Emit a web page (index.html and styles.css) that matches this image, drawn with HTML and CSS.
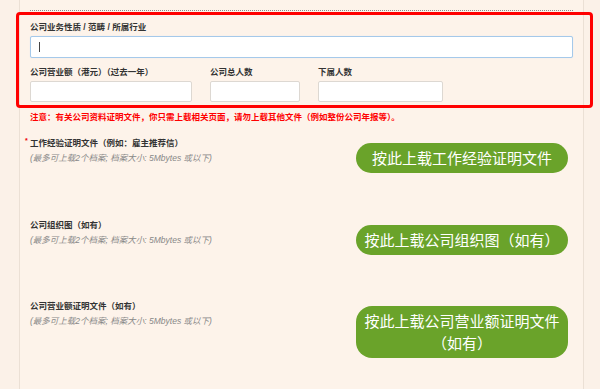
FILE: index.html
```html
<!DOCTYPE html>
<html lang="zh">
<head>
<meta charset="utf-8">
<link rel="stylesheet" href="styles.css">
</head>
<body>
<div class="page">
  <div class="panel">
    <div class="dotted"></div>
    <div class="fields">
      <div class="highlight"></div>
      <div class="field">
        <div class="label">公司业务性质 / 范畴 / 所属行业</div>
        <div class="input focus"><span class="caret"></span></div>
      </div>
      <div class="row">
        <div class="field col-a">
          <div class="label">公司营业额（港元）（过去一年）</div>
          <div class="input"></div>
        </div>
        <div class="field col-b">
          <div class="label">公司总人数</div>
          <div class="input"></div>
        </div>
        <div class="field col-c">
          <div class="label">下属人数</div>
          <div class="input"></div>
        </div>
      </div>
    </div>
    <div class="note">注意：有关公司资料证明文件，你只需上载相关页面，请勿上载其他文件（例如整份公司年报等）。</div>

    <div class="section">
      <div class="info">
        <div class="title"><span class="req">*</span>工作经验证明文件（例如：雇主推荐信）</div>
        <div class="hint">(最多可上载2个档案; 档案大小: 5Mbytes 或以下)</div>
      </div>
      <div class="btn">按此上载工作经验证明文件</div>
    </div>

    <div class="section">
      <div class="info">
        <div class="title">公司组织图（如有）</div>
        <div class="hint">(最多可上载2个档案; 档案大小: 5Mbytes 或以下)</div>
      </div>
      <div class="btn">按此上载公司组织图（如有）</div>
    </div>

    <div class="section">
      <div class="info">
        <div class="title">公司营业额证明文件（如有）</div>
        <div class="hint">(最多可上载2个档案; 档案大小: 5Mbytes 或以下)</div>
      </div>
      <div class="btn">按此上载公司营业额证明文件（如有）</div>
    </div>
  </div>
</div>
</body>
</html>
```

FILE: styles.css
```css
html, body {
  margin: 0;
  padding: 0;
  height: 100%;
}
body {
  background: #fbf1e8;
  font-family: "Liberation Sans", "Noto Sans CJK SC", sans-serif;
  color: #333;
  overflow: hidden;
}
.page {
  height: 389px;
  padding-left: 19px;
}
.panel {
  width: 543px;
  height: 389px;
  box-sizing: content-box;
  padding: 10px 10px 0 10px;
  border-left: 1px solid #ebe0d5;
  border-right: 1px solid #ebe0d5;
  background: #fdf3ea;
}
.dotted {
  border-top: 1px dotted #8a8a8a;
  height: 0;
}
.fields {
  position: relative;
  margin-top: 10px;
}
.highlight {
  position: absolute;
  top: -9px;
  left: -14px;
  right: -20px;
  bottom: -6px;
  border: 3px solid #ff0000;
  border-radius: 4px;
  pointer-events: none;
}
.label {
  font-size: 8.5px;
  line-height: 12px;
  font-weight: bold;
  color: #333;
  margin-bottom: 3px;
}
.input {
  height: 19px;
  background: #fff;
  border: 1px solid #ddd8d2;
  border-radius: 2px;
  position: relative;
}
.input.focus {
  height: 20px;
  border-color: #a5c9ea;
  box-shadow: 0 0 1px #cfe2f3;
}
.caret {
  position: absolute;
  left: 8px;
  top: 5px;
  width: 1px;
  height: 10px;
  background: #444;
}
.row {
  display: flex;
  gap: 18px;
  margin-top: 8px;
}
.col-a { width: 162px; }
.col-b { width: 90px; }
.col-c { width: 125px; }
.note {
  margin-top: 9px;
  font-size: 8.5px;
  line-height: 12px;
  font-weight: bold;
  color: #ff0000;
}
.section {
  display: flex;
  justify-content: space-between;
  align-items: flex-start;
  height: 81.5px;
}
.note + .section {
  margin-top: 14px;
}
.title {
  font-size: 8.5px;
  line-height: 12px;
  font-weight: bold;
  color: #333;
}
.req {
  display: inline-block;
  width: 5px;
  margin-left: -5px;
  color: #e00;
  font-size: 7px;
  vertical-align: top;
  line-height: 8px;
}
.hint {
  margin-top: 3px;
  font-size: 8.5px;
  line-height: 12px;
  font-style: italic;
  color: #888;
}
.btn {
  width: 212px;
  box-sizing: border-box;
  margin-top: 6px;
  margin-right: 5px;
  padding: 4px 8px;
  background: #6aa32a;
  color: #fff;
  font-family: "Noto Sans CJK SC", sans-serif;
  font-size: 15px;
  line-height: 22px;
  text-align: center;
  border-radius: 16px;
}
```
